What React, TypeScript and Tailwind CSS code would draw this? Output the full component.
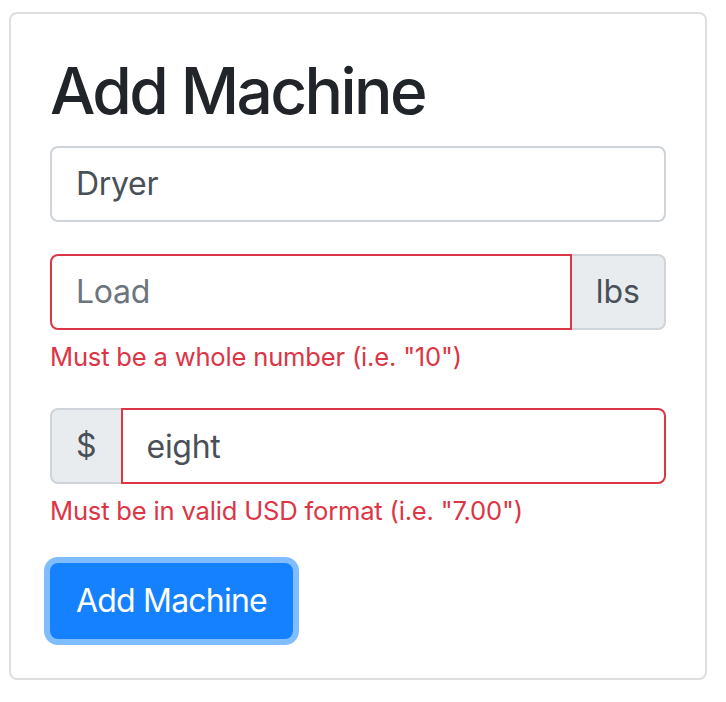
import React from "react";

export default function App() {
  const font = { fontFamily: "Inter, 'Liberation Sans', sans-serif" };
  return (
    <div className="min-h-[702px] w-[726px] bg-white pl-[9px] pt-[12px]" style={font}>
      <div className="w-[698px] rounded-[8px] border-2 border-[#dfdfdf] px-[39px] pb-[39px] pt-[39px]">
        <h2 className="mb-[16px] text-[64px] font-medium leading-[1.2] tracking-[-2.6px] text-[#212529]">
          Add Machine
        </h2>
        <div className="mb-[32px]">
          <input
            readOnly
            value="Dryer"
            className="h-[76px] w-full rounded-[8px] border-2 border-[#ced4da] bg-white px-[24px] text-[32px] tracking-[-0.3px] text-[#495057] outline-none"
          />
        </div>
        <div className="mb-[32px]">
          <div className="flex h-[76px]">
            <input
              readOnly
              placeholder="Load"
              className="h-full min-w-0 flex-1 rounded-l-[8px] border-2 border-[#dc3545] bg-white px-[24px] text-[32px] tracking-[-0.3px] text-[#495057] outline-none placeholder:text-[#6c757d]"
            />
            <div className="flex h-full items-center rounded-r-[8px] border-2 border-l-0 border-[#ced4da] bg-[#e9ecef] px-[24px] text-[32px] text-[#495057]">
              lbs
            </div>
          </div>
          <div className="mt-[8px] text-[25.6px] leading-[1.5] tracking-[-0.2px] text-[#dc3545]">
            Must be a whole number (i.e. "10")
          </div>
        </div>
        <div className="mb-[32px]">
          <div className="flex h-[76px]">
            <div className="flex h-full items-center rounded-l-[8px] border-2 border-r-0 border-[#ced4da] bg-[#e9ecef] px-[24px] text-[32px] text-[#495057]">
              $
            </div>
            <input
              readOnly
              value="eight"
              className="h-full min-w-0 flex-1 rounded-r-[8px] border-2 border-[#dc3545] bg-white px-[24px] text-[32px] tracking-[-0.3px] text-[#495057] outline-none"
            />
          </div>
          <div className="mt-[8px] text-[25.6px] leading-[1.5] tracking-[-0.2px] text-[#dc3545]">
            Must be in valid USD format (i.e. "7.00")
          </div>
        </div>
        <button className="h-[76px] rounded-[8px] border-2 border-[#1681ff] bg-[#1681ff] px-[24px] text-[32px] tracking-[-0.8px] text-white shadow-[0_0_0_6px_#80bdff]">
          Add Machine
        </button>
      </div>
    </div>
  );
}
